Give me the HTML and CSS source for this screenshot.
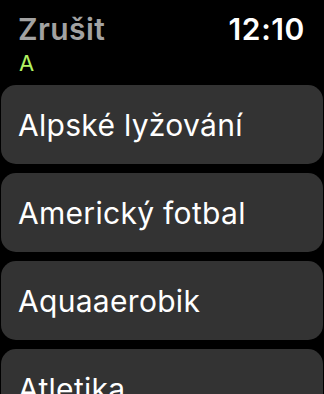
FILE: index.html
```html
<!DOCTYPE html>
<html lang="cs">
<head>
<meta charset="utf-8">
<link rel="stylesheet" href="styles.css">
</head>
<body>
<div class="screen">
  <div class="header">
    <span class="cancel">Zrušit</span>
    <span class="time">12:10</span>
  </div>
  <div class="section">A</div>
  <div class="list">
    <div class="card">Alpské lyžování</div>
    <div class="card">Americký fotbal</div>
    <div class="card">Aquaaerobik</div>
    <div class="card">Atletika</div>
  </div>
</div>
</body>
</html>
```
FILE: styles.css
```css
html, body {
  margin: 0;
  padding: 0;
  background: #000;
}
.screen {
  width: 324px;
  height: 394px;
  overflow: hidden;
  font-family: Inter, "Noto Sans", sans-serif;
  color: #fff;
}
.header {
  display: flex;
  justify-content: space-between;
  align-items: baseline;
  padding: 11px 19px 0 18px;
  height: 38px;
  line-height: 36px;
}
.cancel {
  font-size: 30px;
  font-weight: 600;
  color: #a2a2a2;
  letter-spacing: 0.4px;
}
.time {
  font-size: 30px;
  font-weight: 600;
  color: #fff;
  letter-spacing: 0.6px;
}
.section {
  padding-left: 19px;
  font-size: 22px;
  line-height: 28px;
  height: 30px;
  color: #b3f262;
}
.list {
  display: flex;
  flex-direction: column;
  gap: 9px;
  padding: 6px 1px 0 1px;
}
.card {
  flex: none;
  height: 79px;
  border-radius: 15px;
  background: #333333;
  display: flex;
  align-items: center;
  padding-left: 17px;
  font-size: 30px;
  line-height: 36px;
  letter-spacing: 0.3px;
  color: #fff;
  box-sizing: border-box;
}
```
